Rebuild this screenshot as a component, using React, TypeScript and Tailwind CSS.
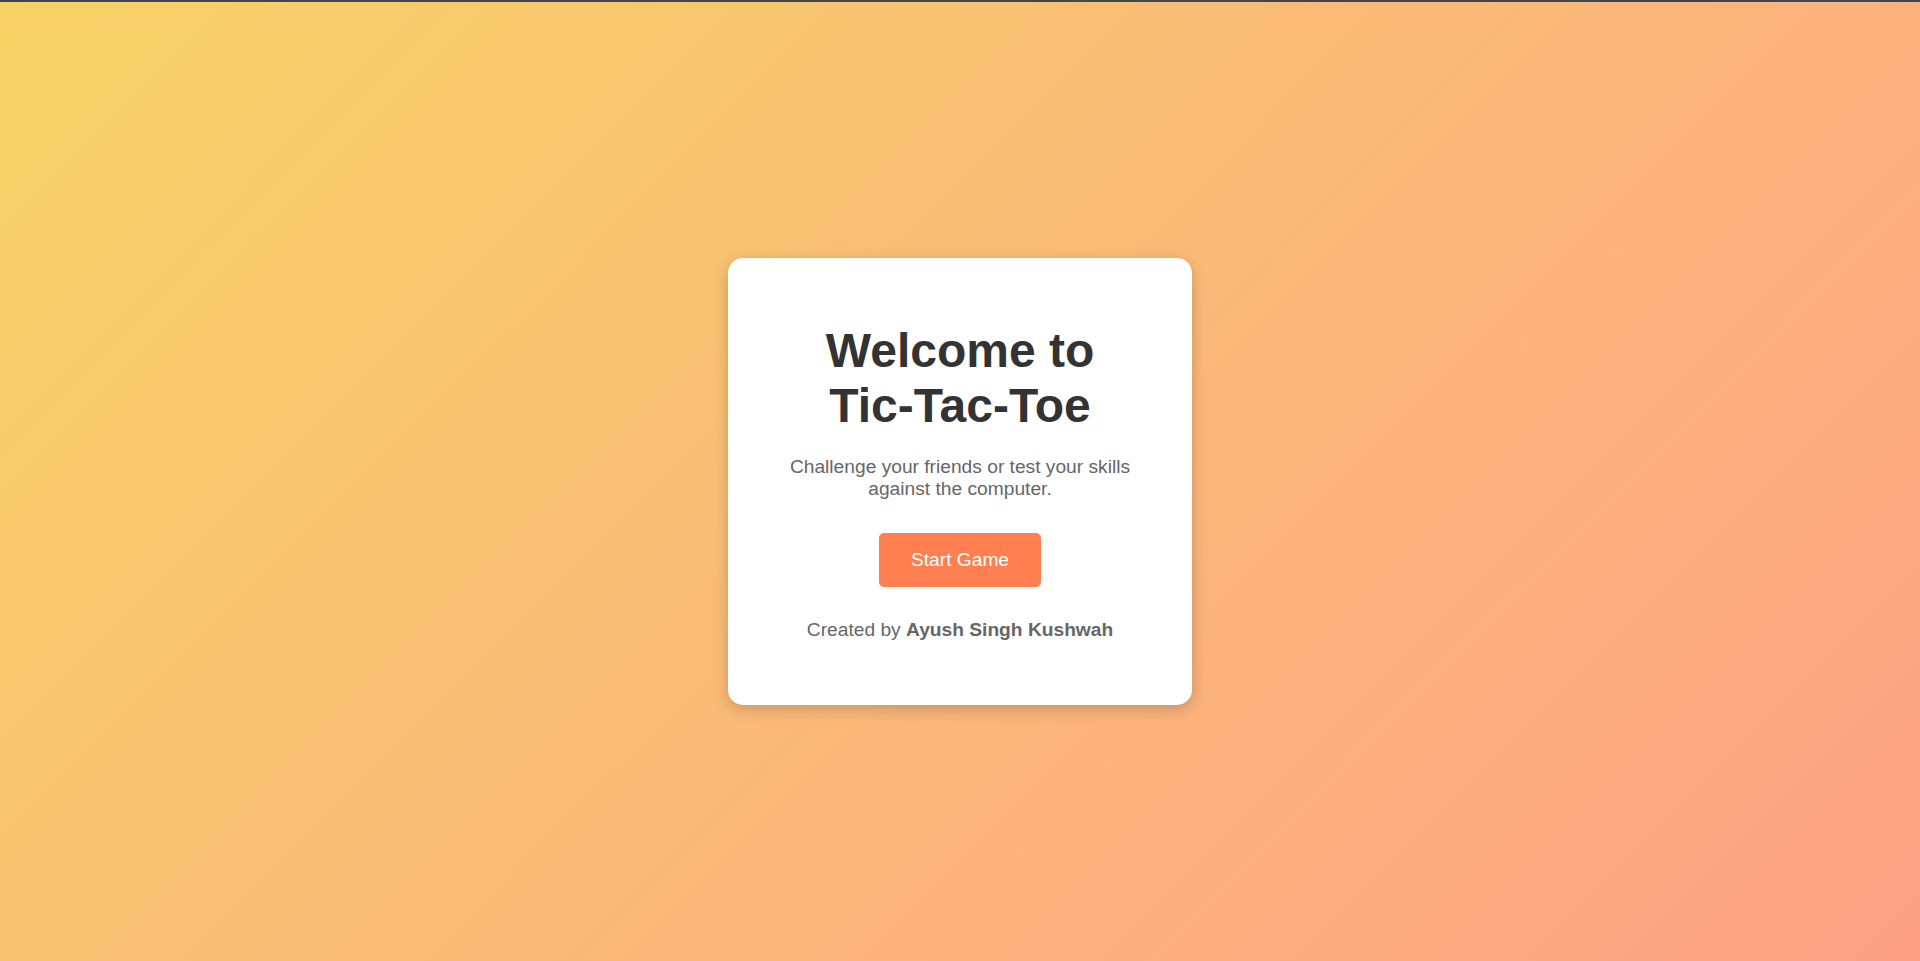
export default function App() {
  return (
    <div className="h-screen flex flex-col bg-linear-135 from-[#f6d365] to-[#fda085] font-['Liberation_Sans',Arial,sans-serif]">
      <div className="h-[2px] bg-[#42454d]" />
      <div className="flex-1 flex items-center justify-center">
        <div className="w-[464px] bg-white rounded-[15px] px-8 pt-[65px] pb-[64px] text-center shadow-[0_4px_15px_rgba(0,0,0,0.2)]">
          <h1 className="text-[48px] leading-[55px] font-bold text-[#333]">
            Welcome to
            <br />
            Tic-Tac-Toe
          </h1>
          <p className="mt-[23px] text-[19.2px] leading-[22px] text-[#666]">
            Challenge your friends or test your skills against the computer.
          </p>
          <button className="mt-[33px] h-[54px] px-8 rounded-[5px] bg-[#ff7f50] text-white text-[19.2px] leading-[22px]">
            Start Game
          </button>
          <p className="mt-[32px] text-[19.2px] leading-[22px] text-[#666]">
            Created by <span className="font-bold">Ayush Singh Kushwah</span>
          </p>
        </div>
      </div>
    </div>
  );
}
